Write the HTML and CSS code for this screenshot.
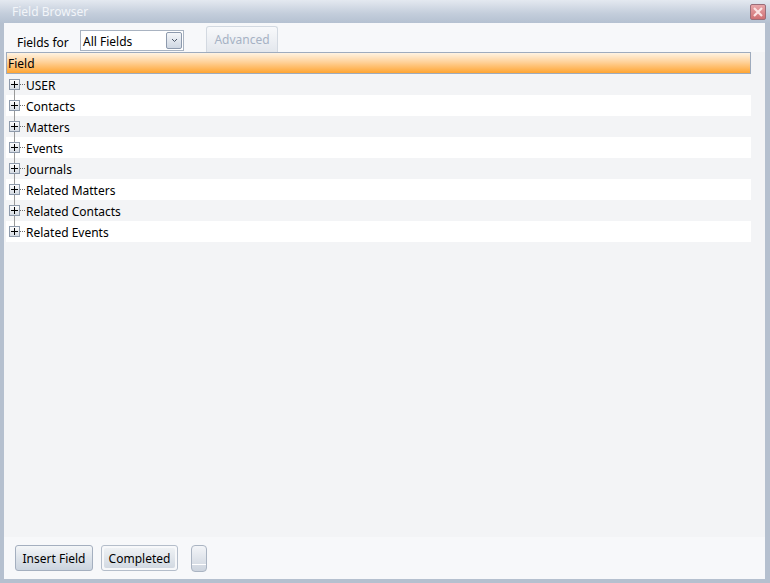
FILE: index.html
```html
<!DOCTYPE html>
<html lang="en">
    <head>
        <meta charset="UTF-8">
        <title>Field Browser</title>
        <link rel="stylesheet" href="styles.css">
    </head>
    <body>
        <div class="window">
            <!-- Title bar -->
            <div class="titlebar">
                <span class="title">Field Browser</span>
                <span class="close">
                    <svg width="10" height="10" viewBox="0 0 10 10">
                        <path d="M1 1 L9 9 M9 1 L1 9" stroke="#fbe3e3" stroke-width="2.2"/>
                    </svg>
                </span>
            </div>

            <div class="frame">
                <!-- Toolbar -->
                <div class="toolbar">
                    <span class="label">Fields for</span>
                    <div class="select">
                        <span class="value">All Fields</span>
                        <span class="drop">
                            <svg width="7" height="5" viewBox="0 0 7 5">
                                <path d="M1 1 L3.5 3.5 L6 1" fill="none" stroke="#4a5566" stroke-width="1"/>
                            </svg>
                        </span>
                    </div>
                    <div class="tab">Advanced</div>
                </div>

                <!-- List -->
                <div class="list">
                    <div class="header">Field</div>
                    <div class="row"><span class="node"><span class="box"></span></span>USER</div>
                    <div class="row"><span class="node"><span class="box"></span></span>Contacts</div>
                    <div class="row"><span class="node"><span class="box"></span></span>Matters</div>
                    <div class="row"><span class="node"><span class="box"></span></span>Events</div>
                    <div class="row"><span class="node"><span class="box"></span></span>Journals</div>
                    <div class="row"><span class="node"><span class="box"></span></span>Related Matters</div>
                    <div class="row"><span class="node"><span class="box"></span></span>Related Contacts</div>
                    <div class="row last"><span class="node"><span class="box"></span></span>Related Events</div>
                </div>

                <!-- Buttons -->
                <div class="footer">
                    <div class="btn insert">Insert Field</div>
                    <div class="btn active"><span>Completed</span></div>
                    <div class="grip"><span></span></div>
                </div>
            </div>
        </div>
    </body>
</html>
```

FILE: styles.css
```css
body {
    margin: 0;
    font-family: "Noto Sans", "Open Sans", sans-serif;
    font-size: 12px;
    color: #000;
}

.window {
    width: 770px;
    height: 583px;
    display: flex;
    flex-direction: column;
    background: #b5c0cf;
}

.titlebar {
    height: 23px;
    display: flex;
    align-items: center;
    justify-content: space-between;
    padding: 0 4px 0 12px;
    background: linear-gradient(#e4e9f0, #c3cddb 60%, #b5c1d1);
}

.title {
    color: #f2f5f9;
    font-size: 12px;
}

.close {
    width: 14px;
    height: 14px;
    display: flex;
    align-items: center;
    justify-content: center;
    border: 1px solid #9a6d78;
    border-radius: 2px;
    background: linear-gradient(#e8a7aa, #cf6f72);
}

.frame {
    flex: 1;
    display: flex;
    flex-direction: column;
    margin: 0 5px 4px 4px;
    background: #f3f4f6;
}

.toolbar {
    height: 29px;
    display: flex;
    align-items: flex-end;
    background: #f7f8fa;
    padding-left: 13px;
}

.label {
    margin-bottom: 1px;
    margin-right: 10px;
    width: 53px;
}

.select {
    width: 104px;
    height: 21px;
    margin-bottom: 1px;
    border: 1px solid #a9b3c1;
    background: #fff;
    display: flex;
    align-items: center;
    justify-content: space-between;
    padding-left: 2px;
    box-sizing: border-box;
    line-height: 18px;
}

.value {
    padding-top: 2px;
}

.drop {
    width: 16px;
    height: 17px;
    margin-right: 1px;
    border: 1px solid #8d9aad;
    border-radius: 2px;
    background: linear-gradient(#f4f6f9, #cfd7e2);
    display: flex;
    align-items: center;
    justify-content: center;
    box-sizing: border-box;
}

.tab {
    width: 72px;
    height: 26px;
    margin-left: 22px;
    border: 1px solid #d3d9e1;
    border-bottom: none;
    border-radius: 3px 3px 0 0;
    background: linear-gradient(#f8f9fb, #e3e7ed);
    color: #a6b2c4;
    display: flex;
    align-items: center;
    justify-content: center;
    box-sizing: border-box;
}

.list {
    flex: 1;
    padding: 0 14px 0 2px;
}

.header {
    height: 22px;
    border: 1px solid #9eabbd;
    background: linear-gradient(#fff3e2, #ffd29a 45%, #ffa533);
    padding-left: 1px;
    line-height: 21px;
    box-sizing: border-box;
}

.row {
    height: 21px;
    display: flex;
    align-items: center;
    padding-top: 1px;
    box-sizing: border-box;
}

.row:nth-of-type(odd) {
    background: #fff;
}

.node {
    position: relative;
    width: 20px;
    height: 21px;
    margin-top: -1px;
    display: flex;
    align-items: center;
    padding-left: 3px;
    box-sizing: border-box;
}

.node::before {
    content: "";
    position: absolute;
    left: 8px;
    top: 0;
    bottom: 0;
    border-left: 1px solid #9a9a9a;
}

.row:nth-of-type(2) .node::before {
    top: 11px;
}

.row.last .node::before {
    bottom: 11px;
}

.node::after {
    content: "";
    position: absolute;
    left: 14px;
    width: 5px;
    top: 10px;
    border-top: 1px dotted #6d6d6d;
}

.box {
    position: relative;
    z-index: 1;
    width: 11px;
    height: 11px;
    border: 1px solid #8e9aab;
    background:
        linear-gradient(#000, #000) center / 7px 1px no-repeat,
        linear-gradient(#000, #000) center / 1px 7px no-repeat,
        linear-gradient(#fcfcfd, #d5dbe3);
    box-sizing: border-box;
}

.footer {
    height: 42px;
    background: #f7f8fa;
    display: flex;
    align-items: center;
    padding-left: 11px;
    gap: 8px;
}

.btn {
    height: 26px;
    border: 1px solid #a4afbf;
    border-radius: 3px;
    background: linear-gradient(#f4f6f8, #dde3ea 50%, #cbd4df);
    display: flex;
    align-items: center;
    justify-content: center;
    box-sizing: border-box;
}

.btn.insert {
    width: 78px;
}

.btn.active {
    width: 77px;
    border-color: #b4bdca;
    background: #f7f8fa;
}

.btn.active span {
    height: 20px;
    width: 71px;
    display: flex;
    align-items: center;
    justify-content: center;
    border-radius: 2px;
    background: linear-gradient(#eef1f4, #d2d9e2);
}

.grip {
    width: 16px;
    height: 27px;
    margin-left: 5px;
    border: 1px solid #aab4c2;
    border-radius: 4px;
    background: linear-gradient(#f3f5f8, #cdd4de);
    box-sizing: border-box;
    position: relative;
}

.grip span {
    position: absolute;
    left: 0;
    right: 0;
    top: 18px;
    border-top: 1px solid #fff;
}
```
